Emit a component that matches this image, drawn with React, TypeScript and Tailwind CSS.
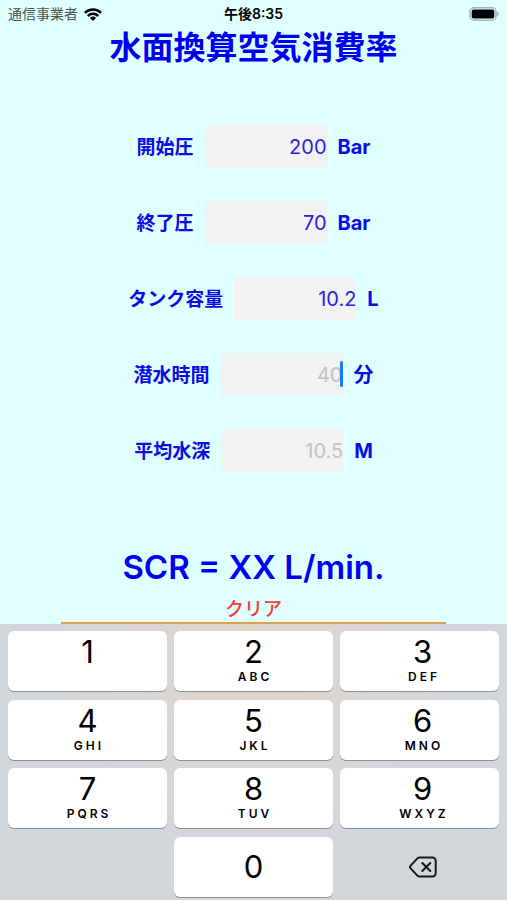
import { useState } from "react";

type Field = {
  id: string;
  label: string;
  unit: string;
  initial: string;
  placeholder: string;
  active?: boolean;
};

const fields: Field[] = [
  { id: "start", label: "開始圧", unit: "Bar", initial: "200", placeholder: "200" },
  { id: "end", label: "終了圧", unit: "Bar", initial: "70", placeholder: "70" },
  { id: "tank", label: "タンク容量", unit: "L", initial: "10.2", placeholder: "10.2" },
  { id: "time", label: "潜水時間", unit: "分", initial: "", placeholder: "40", active: true },
  { id: "depth", label: "平均水深", unit: "M", initial: "", placeholder: "10.5" },
];

const keys = [
  { digit: "1", letters: "" },
  { digit: "2", letters: "ABC" },
  { digit: "3", letters: "DEF" },
  { digit: "4", letters: "GHI" },
  { digit: "5", letters: "JKL" },
  { digit: "6", letters: "MNO" },
  { digit: "7", letters: "PQRS" },
  { digit: "8", letters: "TUV" },
  { digit: "9", letters: "WXYZ" },
];

function StatusBar() {
  return (
    <header className="grid h-7 grid-cols-3 items-center px-2 text-sm">
      <div className="flex items-center gap-1.5 text-[#4a5555]">
        <span>通信事業者</span>
        <svg viewBox="0 0 18 13" className="h-[13px] w-[18px]" aria-hidden="true">
          <g fill="none" stroke="#000" strokeWidth="2.5">
            <path d="M0.9 4.9a11.6 11.6 0 0 1 16.2 0" />
            <path d="M3.8 8a7.4 7.4 0 0 1 10.4 0" />
          </g>
          <path d="M9 13 5.9 9.9a4.4 4.4 0 0 1 6.2 0z" fill="#000" />
        </svg>
      </div>
      <time className="text-center text-sm font-semibold text-black">午後8:35</time>
      <svg viewBox="0 0 31 14" className="h-[14px] w-[31px] justify-self-end" aria-hidden="true">
        <rect x="2" y="0.75" width="26" height="12.5" rx="4" fill="none" stroke="#a3b5b3" strokeWidth="1.5" />
        <rect x="3.7" y="2.5" width="22.6" height="9" rx="2" fill="#000" />
        <path d="M29 4.7v4.6c2.4-.8 2.4-3.8 0-4.6z" fill="#a3b5b3" />
      </svg>
    </header>
  );
}

function FieldRow({ field, value, onChange }: { field: Field; value: string; onChange: (v: string) => void }) {
  return (
    <div className="flex items-center justify-center gap-[11px] text-[19px] font-bold text-[#0b0be6]">
      <label htmlFor={field.id} className="pt-1">{field.label}</label>
      <div className="relative">
        <input
          id={field.id}
          inputMode="decimal"
          value={value}
          placeholder={field.placeholder}
          onChange={(e) => onChange(e.target.value)}
          className="block h-[43px] w-[122px] bg-[#f2f2f2] text-right text-xl font-normal text-[#2a1fdc] outline-none placeholder:text-[#c2c2c4]"
        />
        {field.active && <span className="absolute top-2 right-0 h-[26px] w-[3px] rounded-sm bg-[#1a7cf5]" />}
      </div>
      <span className="text-xl">{field.unit}</span>
    </div>
  );
}

export default function App() {
  const [values, setValues] = useState<string[]>(fields.map((f) => f.initial));

  return (
    <div className="flex min-h-screen flex-col bg-[#e0ffff] font-['Inter','Noto_Sans_CJK_JP',sans-serif]">
      <StatusBar />
      <main className="flex flex-1 flex-col">
        <h1 className="pt-0.5 text-center text-[32px] leading-9 font-bold text-[#0000f5]">水面換算空気消費率</h1>
        <form className="mt-[59px] flex flex-col gap-[33px]">
          {fields.map((field, i) => (
            <FieldRow
              key={field.id}
              field={field}
              value={values[i]}
              onChange={(v) => setValues(values.map((old, j) => (j === i ? v : old)))}
            />
          ))}
        </form>
        <output className="mt-[75px] block text-center text-[33px] leading-10 font-semibold text-[#0000f5]">
          SCR = XX L/min.
        </output>
        <button
          type="button"
          onClick={() => setValues(fields.map(() => ""))}
          className="mx-auto mt-2 h-[29px] w-[76%] border-b-2 border-[#dba04a] pt-0.5 text-[19px] leading-6 font-medium text-[#fa3c34]"
        >
          クリア
        </button>
      </main>
      <section
        aria-label="キーパッド"
        className="bg-[#d2d6db] bg-[radial-gradient(ellipse_at_50%_0%,#e0d5c9_0%,#dad6d3_30%,#d2d7db_60%)] px-2 pt-[7px] pb-[3px]"
      >
        <div className="grid h-[266px] grid-cols-3 content-between gap-x-[7px]">
          {keys.map((k) => (
            <button
              key={k.digit}
              type="button"
              className="flex h-[60px] flex-col items-center rounded-md bg-white pt-[3px] text-black shadow-[0_1px_0_#8b8e92] nth-[3n]:pl-1.5"
            >
              <span className="text-[31px] leading-9">{k.digit}</span>
              <span className="pt-px pl-[3px] text-xs leading-3 font-semibold tracking-[3px]">{k.letters}</span>
            </button>
          ))}
          <button
            type="button"
            className="col-start-2 h-[60px] rounded-md bg-white text-[31px] leading-9 text-black shadow-[0_1px_0_#8b8e92]"
          >
            0
          </button>
          <button type="button" aria-label="削除" className="flex h-[60px] items-center justify-center pl-1.5">
            <svg viewBox="0 0 28 22" className="h-[22px] w-7" fill="none" stroke="#15181c" strokeWidth="2" strokeLinecap="round" strokeLinejoin="round">
              <path d="M10.5 1.5h13a3.2 3.2 0 0 1 3.2 3.2v12.6a3.2 3.2 0 0 1-3.2 3.2h-13a3 3 0 0 1-2.1-.9L1.7 12.4a2 2 0 0 1 0-2.8l6.7-7.2a3 3 0 0 1 2.1-.9z" />
              <path d="m13.3 7 8 8M21.3 7l-8 8" />
            </svg>
          </button>
        </div>
      </section>
    </div>
  );
}
